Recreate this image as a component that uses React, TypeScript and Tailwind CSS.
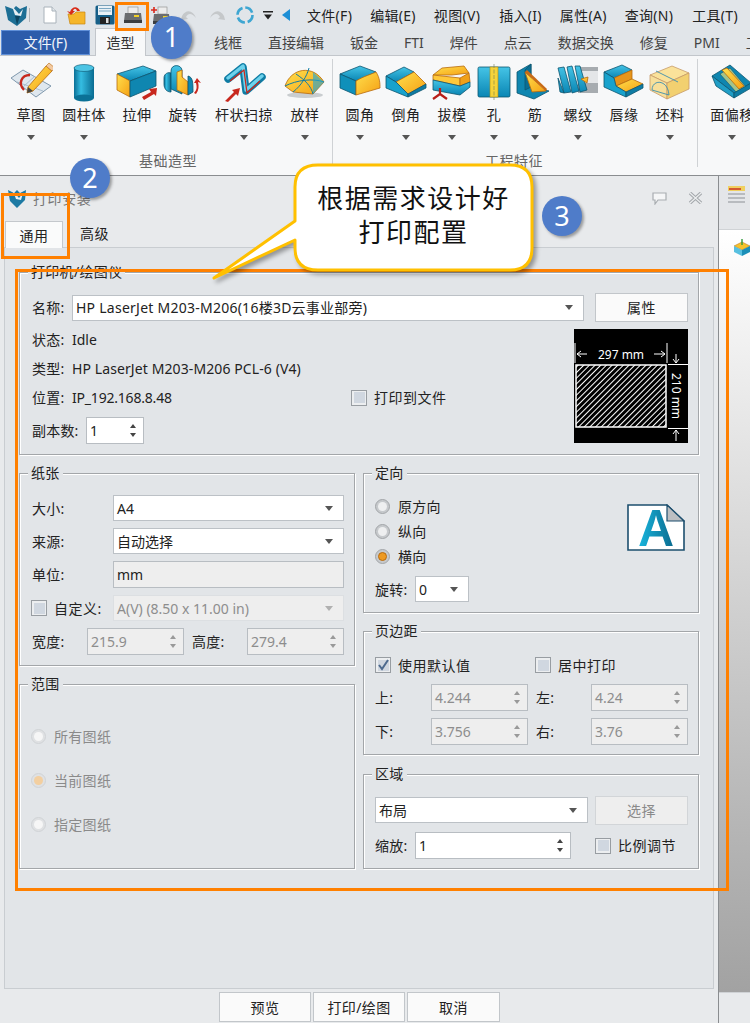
import type { ReactNode } from "react";

const menus = [
  ["文件(F)", "ml-[17px]"],
  ["编辑(E)", "ml-[18px]"],
  ["视图(V)", "ml-[18px]"],
  ["插入(I)", "ml-[19px]"],
  ["属性(A)", "ml-[18px]"],
  ["查询(N)", "ml-[18px]"],
  ["工具(T)", "ml-[19px]"],
];
const tabs = ["线框", "直接编辑", "钣金", "FTI", "焊件", "点云", "数据交换", "修复", "PMI", "工具"];

/* ---------- ribbon icons ---------- */
function Defs() {
  return (
    <svg className="absolute w-0 h-0">
      <defs>
        <linearGradient id="cy" x1="0" y1="0" x2="0" y2="1">
          <stop offset="0" stopColor="#45c4e6" />
          <stop offset="1" stopColor="#0a86b4" />
        </linearGradient>
        <linearGradient id="cyh" x1="0" y1="0" x2="1" y2="0">
          <stop offset="0" stopColor="#0b6f96" />
          <stop offset="0.35" stopColor="#35bde2" />
          <stop offset="1" stopColor="#0a6c92" />
        </linearGradient>
        <linearGradient id="ltr" x1="0" y1="0" x2="1" y2="0">
          <stop offset="0" stopColor="#18b4dc" />
          <stop offset="1" stopColor="#0b6c90" />
        </linearGradient>
        <linearGradient id="ye" x1="0" y1="0" x2="1" y2="1">
          <stop offset="0" stopColor="#ffe04d" />
          <stop offset="1" stopColor="#f5a014" />
        </linearGradient>
      </defs>
    </svg>
  );
}

const edge = { stroke: "#0d5670", strokeWidth: 0.8, strokeLinejoin: "round" as const };
const yedge = { stroke: "#b8690e", strokeWidth: 0.8, strokeLinejoin: "round" as const };

const icons: Record<string, ReactNode> = {
  草图: (
    <>
      <path d="M2 16 L14 8 L42 24 L27 35 Z" fill="#dfe7ee" stroke="#7f98ad" strokeWidth="1" />
      <path d="M8 20 L34 29 M14 25 L26 14 M21 30 L33 19" stroke="#9db2c4" strokeWidth="0.8" fill="none" />
      <path d="M21 13 C12 13 9 22 15 28" fill="none" stroke="#c6281e" strokeWidth="2.4" />
      <path d="M19 25 L37 4 L43 9 L24 29 L18 31 Z" fill="url(#ye)" {...yedge} />
      <path d="M37 4 L40 1 L46 6 L43 9 Z" fill="#f2c9a0" stroke="#b8690e" strokeWidth="0.6" />
      <path d="M19 25 L18 31 L24 29 Z" fill="#444" />
    </>
  ),
  圆柱体: (
    <>
      <rect x="12" y="5" width="20" height="31" fill="url(#cyh)" />
      <ellipse cx="22" cy="36" rx="10" ry="3.5" fill="#0b7196" />
      <ellipse cx="22" cy="6" rx="10" ry="3.5" fill="#4cc4e4" stroke="#0d5670" strokeWidth="0.6" />
    </>
  ),
  拉伸: (
    <>
      <path d="M2 12 L28 4 L41 9 L15 19 Z" fill="url(#cy)" {...edge} />
      <path d="M2 12 L15 19 L15 35 L2 28 Z" fill="url(#ye)" {...yedge} />
      <path d="M15 19 L41 9 L41 24 L15 35 Z" fill="#0f86b0" {...edge} />
      <path d="M27 35 L36 30 L34 27 L42 26 L41 34 L39 32 L29 38 Z" fill="#c8281e" />
    </>
  ),
  旋转: (
    <>
      <path d="M3 16 C3 11 8 10 10 11 L10 30 C6 30 3 27 3 22 Z" fill="url(#cyh)" {...edge} />
      <path d="M10 9 C10 2 20 2 21 8 L21 32 L10 27 Z" fill="url(#cy)" {...edge} />
      <path d="M16 10 L21 8 L21 15 L27 20 L27 33 L16 28 Z" fill="url(#ye)" {...yedge} />
      <path d="M27 14 C32 15 32 21 32 30 L27 33 Z" fill="#0f86b0" {...edge} />
      <path d="M35 32 C38 28 38 24 37 20 L40 21 L36 16 L33 21 L35 21 C36 25 36 28 33 31 Z" fill="#c8281e" />
    </>
  ),
  杆状扫掠: (
    <>
      <path d="M6 17 L21 5 L24 29 L40 15" fill="none" stroke="#0e7ca4" strokeWidth="7.5" strokeLinejoin="round" strokeLinecap="round" />
      <path d="M6 16 L21 4 L24 28 L40 14" fill="none" stroke="#6dd2ec" strokeWidth="3.4" strokeLinejoin="round" strokeLinecap="round" />
      <path d="M8 19 L22 8 L25 31 L38 19" fill="none" stroke="#c8281e" strokeWidth="1.3" strokeLinejoin="round" />
      <path d="M3 39 L12 30 L10 28 L18 26 L16 34 L14 32 L6 40 Z" fill="#c8281e" />
    </>
  ),
  放样: (
    <>
      <ellipse cx="22" cy="33" rx="18" ry="3" fill="#c9cdd0" />
      <path d="M2 24 C8 6 30 2 41 20 L30 32 L10 30 Z" fill="url(#ye)" {...yedge} />
      <path d="M13 12 C22 18 28 24 30 32 M26 6 C24 14 18 24 10 30 M2 24 C14 18 30 16 41 20" fill="none" stroke="#0f7da6" strokeWidth="1" />
      <path d="M30 10 L41 20 L30 32 Z" fill="#28a8d0" fillOpacity="0.65" />
    </>
  ),
  圆角: (
    <>
      <path d="M2 12 L22 4 L38 10 L18 19 Z" fill="url(#cy)" {...edge} />
      <path d="M2 12 L18 19 L18 33 L2 26 Z" fill="#0f90ba" {...edge} />
      <path d="M18 19 C26 14 34 12 38 10 C42 16 42 22 42 26 L18 33 Z" fill="url(#ye)" {...yedge} />
    </>
  ),
  倒角: (
    <>
      <path d="M2 14 L20 5 L30 10 L12 20 Z" fill="url(#cy)" {...edge} />
      <path d="M12 20 L30 10 L42 22 L24 32 Z" fill="url(#ye)" {...yedge} />
      <path d="M2 14 L12 20 L24 32 L24 35 L2 26 Z" fill="#18a2cc" {...edge} />
      <path d="M24 32 L42 22 L42 26 L24 35 Z" fill="#0e7ca4" {...edge} />
    </>
  ),
  拔模: (
    <>
      <path d="M3 13 L12 6 L34 4 L39 11 L22 13 Z" fill="url(#ye)" {...yedge} />
      <path d="M3 13 L30 16 L30 24 L3 18 Z" fill="#ffc83a" {...yedge} />
      <path d="M30 16 L39 11 L40 20 L30 24 Z" fill="#f0a018" {...yedge} />
      <path d="M3 18 L30 24 L40 20 L40 25 L30 33 L3 28 Z" fill="url(#cy)" {...edge} />
      <path d="M10 26 L10 32 M10 32 L3 37 M10 32 L17 37" stroke="#b81e18" strokeWidth="2.2" fill="none" />
    </>
  ),
  孔: (
    <>
      <rect x="6" y="5" width="32" height="30" rx="1.5" fill="url(#cy)" stroke="#0d5670" strokeWidth="0.8" />
      <rect x="18" y="5" width="8" height="30" fill="#f5d33a" stroke="#a98b17" strokeWidth="0.6" />
      <path d="M22 2 L22 38" stroke="#6f7c58" strokeWidth="0.6" strokeDasharray="4 1.5" />
    </>
  ),
  筋: (
    <>
      <path d="M4 10 L18 2 L18 25 L36 29 L21 37 L4 31 Z" fill="#0f86b0" {...edge} />
      <path d="M12 8 L18 2 L18 25 L12 28 Z" fill="#0a6e94" {...edge} />
      <path d="M12 10 L33 29 L19 30 Z" fill="url(#ye)" {...yedge} />
      <path d="M12 10 L14 8 L34 27 L33 29 Z" fill="#c86a16" />
    </>
  ),
  螺纹: (
    <>
      <rect x="22" y="5" width="20" height="26" fill="#a7acb0" />
      <rect x="26" y="9" width="16" height="12" fill="#e4e6e8" />
      <path d="M2 6 L8 5 L15 30 L8 31 Z M11 5 L16 4 L23 29 L16 31 Z M19 4 L24 4 L31 28 L24 30 Z M2 16 L4 30 L8 31 Z" fill="url(#cy)" {...edge} />
      <path d="M25 17 L32 15 L31 21 Z" fill="url(#ye)" {...yedge} />
    </>
  ),
  唇缘: (
    <>
      <path d="M2 10 L20 3 L30 8 L12 16 Z" fill="url(#cy)" {...edge} />
      <path d="M12 16 L30 8 L30 17 L14 24 Z" fill="#e6951a" {...yedge} />
      <path d="M14 24 L30 17 L41 22 L24 30 Z" fill="url(#ye)" {...yedge} />
      <path d="M2 10 L12 16 L14 24 L24 30 L24 35 L2 25 Z" fill="#18a2cc" {...edge} />
      <path d="M24 30 L41 22 L41 26 L24 35 Z" fill="#0e7ca4" {...edge} />
    </>
  ),
  坯料: (
    <>
      <path d="M2 13 L24 4 L41 11 L19 21 Z" fill="#fae29a" stroke="#c79a6a" strokeWidth="0.8" />
      <path d="M2 13 L19 21 L19 37 L2 28 Z" fill="#f7df9a" stroke="#c79a6a" strokeWidth="0.8" />
      <path d="M19 21 L41 11 L41 27 L19 37 Z" fill="#f2d070" stroke="#c79a6a" strokeWidth="0.8" />
      <path d="M4 28 C4 17 20 17 21 33 M4 28 L21 33 M8 9 L30 20" fill="none" stroke="#3d8fb0" strokeWidth="0.9" />
    </>
  ),
  面偏移: (
    <>
      <path d="M2 14 L20 3 L41 21 L24 31 Z" fill="#0f86b0" {...edge} />
      <path d="M2 14 L24 31 L24 36 L6 24 Z" fill="#1f9ec6" {...edge} />
      <path d="M10 12 L20 6 L36 25 L26 30 Z" fill="#a3c38a" stroke="#0d5670" strokeWidth="0.6" />
      <path d="M12 8 L17 6 L34 24 L29 27 Z" fill="url(#ye)" {...yedge} />
      <path d="M24 31 L41 21 L41 26 L24 36 Z" fill="#0e7ca4" {...edge} />
    </>
  ),
};

function Caret({ c = "#555" }: { c?: string }) {
  return (
    <svg width="8" height="5" viewBox="0 0 8 5" className="shrink-0">
      <path d="M0 0 H8 L4 5 Z" fill={c} />
    </svg>
  );
}

function RibbonItem({ label, w, arrow = true }: { label: string; w: string; arrow?: boolean }) {
  return (
    <div className={`${w} shrink-0 flex flex-col items-center`}>
      <div className="h-[46px] flex items-center">
        <svg width="44" height="40" viewBox="0 0 44 40" className="shrink-0">
          {icons[label]}
        </svg>
      </div>
      <div className="h-[20px] leading-[20px] whitespace-nowrap tracking-[0.5px] text-[#222]">{label}</div>
      <div className="mt-[10px] h-[5px]">{arrow && <Caret />}</div>
    </div>
  );
}

/* ---------- form bits ---------- */
function Group({ title, className, children }: { title: string; className: string; children: ReactNode }) {
  return (
    <div className={`relative border border-[#a3a6a9] shadow-[1px_1px_0_#fff,inset_1px_1px_0_#fff] ${className}`}>
      <span className="absolute -top-[11px] left-[8px] px-[3px] bg-[#e2e5e8] leading-[20px] tracking-[0.3px] text-[#222]">{title}</span>
      {children}
    </div>
  );
}

function Combo({ w, value, disabled, className = "" }: { w: string; value: string; disabled?: boolean; className?: string }) {
  return (
    <div
      className={`${w} h-[26px] shrink-0 flex items-center justify-between pl-[3px] pr-[10px] border border-[#bcc1c6] ${className} ${
        disabled ? "bg-[#eeeeee] border-[#dcdfe2] text-[#8d8d8d]" : "bg-white text-[#222]"
      }`}
    >
      <span className="whitespace-nowrap">{value}</span>
      <Caret c={disabled ? "#b0b0b0" : "#555"} />
    </div>
  );
}

function Spin({ w, value, disabled }: { w: string; value: string; disabled?: boolean }) {
  return (
    <div
      className={`${w} h-[27px] shrink-0 flex items-center justify-between pl-[3px] pr-[7px] border border-[#b8bdc2] ${
        disabled ? "bg-[#eeeeee] text-[#8d8d8d]" : "bg-white text-[#222]"
      }`}
    >
      <span>{value}</span>
      <div className="flex flex-col gap-[5px]">
        <svg width="6" height="4" viewBox="0 0 6 4"><path d="M0 4 H6 L3 0 Z" fill={disabled ? "#999" : "#444"} /></svg>
        <svg width="6" height="4" viewBox="0 0 6 4"><path d="M0 0 H6 L3 4 Z" fill={disabled ? "#999" : "#444"} /></svg>
      </div>
    </div>
  );
}

function Check({ on, label, className = "" }: { on?: boolean; label?: string; className?: string }) {
  return (
    <div className={`flex items-center shrink-0 ${className}`}>
      <div className="w-[16px] h-[16px] border border-[#989da2] bg-[#eceef0] flex items-center justify-center">
        <div className="w-[11px] h-[11px] bg-[#d0d7e0] flex items-center justify-center">
          {on && (
            <svg width="12" height="12" viewBox="0 0 12 12" className="shrink-0">
              <path d="M2 6 L5 10 L11 1" fill="none" stroke="#4d6a8e" strokeWidth="2" />
            </svg>
          )}
        </div>
      </div>
      {label && <span className="ml-[7px] tracking-[0.5px] whitespace-nowrap text-[#222]">{label}</span>}
    </div>
  );
}

function Radio({ on, label, disabled }: { on?: boolean; label: string; disabled?: boolean }) {
  return (
    <div className="flex items-center">
      <div
        className={`w-[15px] h-[15px] rounded-full border flex items-center justify-center ${
          disabled ? "border-[#d0d3d6] bg-[#dfe1e3]" : "border-[#a3a6a9] bg-[#c6c9cc]"
        }`}
      >
        <div
          className={`w-[9px] h-[9px] rounded-full ${
            on ? (disabled ? "bg-[#f3cfa0]" : "bg-[#ee9a22] border border-[#b86c10]") : disabled ? "bg-[#f6f6f6]" : "bg-[#eeeff0]"
          }`}
        />
      </div>
      <span className={`ml-[8px] tracking-[0.3px] whitespace-nowrap ${disabled ? "text-[#8a8a8a]" : "text-[#222]"}`}>{label}</span>
    </div>
  );
}

function Btn({ children, className = "" }: { children: ReactNode; className?: string }) {
  return (
    <div className={`flex items-center justify-center border border-[#c2c6ca] bg-[#fafafa] text-[#222] tracking-[0.4px] ${className}`}>
      {children}
    </div>
  );
}

function Lab({ w, children }: { w: string; children: ReactNode }) {
  return <div className={`${w} shrink-0 tracking-[0.2px] whitespace-nowrap text-[#222]`}>{children}</div>;
}

function PaperPreview() {
  return (
    <svg width="114" height="114" viewBox="0 0 114 114" className="shrink-0">
      <defs>
        <pattern id="hatch" width="4" height="4" patternUnits="userSpaceOnUse" patternTransform="rotate(45)">
          <rect width="4" height="4" fill="#000" />
          <rect width="1" height="4" fill="#fff" />
        </pattern>
      </defs>
      <rect width="114" height="114" fill="#000" />
      <rect x="2" y="36" width="90" height="62" fill="url(#hatch)" stroke="#fff" strokeWidth="1.5" />
      <path d="M1 14 V34 M93 14 V34 M94 35.5 H114 M94 99.5 H114 M3 25 H13 M80 25 H91 M3 25 L7 22 M3 25 L7 28 M91 25 L87 22 M91 25 L87 28 M102 25 V34 M102 34 L99 30 M102 34 L105 30 M102 101 V112 M102 101 L99 105 M102 101 L105 105" stroke="#fff" strokeWidth="1" fill="none" />
      <text x="47" y="30" textAnchor="middle" fill="#fff" fontSize="12" fontFamily="Noto Sans">297 mm</text>
      <text transform="translate(98 67) rotate(90)" textAnchor="middle" fill="#fff" fontSize="12" fontFamily="Noto Sans">210 mm</text>
    </svg>
  );
}

function Annotation() {
  return (
    <>
      <div className="absolute left-[115px] top-[2px] w-[34px] h-[29px] border-[3px] border-[#ff8000]" />
      <div className="absolute left-[1px] top-[193px] w-[69px] h-[66px] border-[3px] border-[#ff8000]" />
      <div className="absolute left-[15px] top-[269px] w-[714px] h-[622px] border-[3px] border-[#ff8000]" />
      {[
        ["1", "left-[151px] top-[16px] w-[41px] h-[43px]"],
        ["2", "left-[70px] top-[158px] w-[40px] h-[40px]"],
        ["3", "left-[542px] top-[196px] w-[40px] h-[40px]"],
      ].map(([n, pos]) => (
        <div
          key={n}
          className={`absolute ${pos} rounded-full bg-[#4f7cc9] shadow-[2px_2px_3px_rgba(0,0,0,0.35)] flex items-center justify-center text-white text-[27px] font-['Noto_Sans']`}
        >
          {n}
        </div>
      ))}
      <svg width="750" height="300" viewBox="0 0 750 300" className="absolute left-0 top-0 pointer-events-none">
        <path
          d="M318 165 H510 Q532 165 532 187 V248 Q532 270 510 270 H318 Q295 270 295 248 V240 L214 278 L295 221 V187 Q295 165 318 165 Z"
          fill="#fff"
          stroke="#ffc000"
          strokeWidth="3"
          strokeLinejoin="round"
          style={{ filter: "drop-shadow(3px 3px 2px rgba(0,0,0,0.35))" }}
        />
      </svg>
      <div className="absolute left-[296px] top-[181px] w-[235px] text-center text-[26px] leading-[34px] tracking-[1.5px] text-[#111]">
        <div>根据需求设计好</div>
        <div>打印配置</div>
      </div>
    </>
  );
}

export default function App() {
  return (
    <div className="relative w-[750px] h-[1023px] overflow-hidden bg-[#e8eaec] text-[14px] font-['Noto_Sans','Noto_Sans_CJK_SC',sans-serif]">
      <Defs />

      {/* quick access + menu */}
      <div className="h-[30px] bg-[#e1e5e9] flex items-center text-[#222] overflow-hidden">
        <svg width="24" height="24" viewBox="0 0 24 24" className="ml-[4px] shrink-0">
          <path d="M1 3 L9 6 L12 3 L16 6 L23 3 L22 15 L13 23 L4 17 Z" fill="#1d6f95" />
          <path d="M8 3 L15 11 L19 6 L17 13 L11 12 Z" fill="#e6eef2" />
          <path d="M11 13 L13 22 L16 13 Z" fill="#0c4560" />
        </svg>
        <div className="ml-[1px] w-px h-[14px] bg-[#aeb3b8] shrink-0" />
        <svg width="16" height="18" viewBox="0 0 16 18" className="ml-[12px] shrink-0">
          <path d="M2 1 H10 L14 5 V17 H2 Z" fill="#fff" stroke="#a9b2ba" />
          <path d="M10 1 V5 H14" fill="#e3e8ec" stroke="#a9b2ba" />
        </svg>
        <svg width="20" height="20" viewBox="0 0 20 20" className="ml-[9px] shrink-0">
          <path d="M1 9 H7 L9 7 H18 V19 H3 Z" fill="#f5b62a" stroke="#c98612" strokeWidth="0.7" />
          <path d="M3 7 C5 1 11 1 13 6 L10 6 C9 3 7 3 6 6 L8 6 L4 10 L0 6 Z" fill="#d92a16" />
        </svg>
        <svg width="20" height="20" viewBox="0 0 20 20" className="ml-[8px] shrink-0">
          <rect x="0.5" y="0.5" width="19" height="19" rx="1.5" fill="#165f88" />
          <rect x="3" y="1" width="14" height="9" fill="#e8f0f5" />
          <path d="M4 3.5 H16 M4 6 H16" stroke="#7ba7c2" />
          <rect x="5" y="12" width="10" height="7" fill="#222" />
          <rect x="11" y="13" width="2.5" height="5" fill="#ddd" />
        </svg>
        <svg width="20" height="18" viewBox="0 0 20 18" className="ml-[8px] shrink-0">
          <rect x="5" y="1" width="10" height="7" fill="#ececec" stroke="#888" strokeWidth="0.6" />
          <path d="M2 7 H18 L19 15 H1 Z" fill="#6a6d70" />
          <rect x="1" y="14" width="18" height="3" fill="#3a3d3f" />
          <rect x="11" y="9" width="5" height="2" fill="#f0d028" />
        </svg>
        <svg width="20" height="19" viewBox="0 0 20 19" className="ml-[8px] shrink-0">
          <rect x="7" y="1" width="9" height="7" fill="#ececec" stroke="#888" strokeWidth="0.6" />
          <path d="M3 8 H18 L19 16 H2 Z" fill="#6a6d70" />
          <rect x="2" y="15" width="17" height="3" fill="#3a3d3f" />
          <rect x="12" y="10" width="5" height="2" fill="#f0d028" />
          <path d="M0 4 H6 M3 1 V7" stroke="#d9281c" strokeWidth="1.6" />
        </svg>
        <svg width="16" height="12" viewBox="0 0 16 12" className="ml-[10px] shrink-0">
          <path d="M1 7 C5 0 12 1 15 9 C11 4 7 4 5 8 L7 10 L0 11 Z" fill="#c5c8ca" />
        </svg>
        <svg width="16" height="12" viewBox="0 0 16 12" className="ml-[12px] shrink-0">
          <path d="M15 7 C11 0 4 1 1 9 C5 4 9 4 11 8 L9 10 L16 11 Z" fill="#c5c8ca" />
        </svg>
        <svg width="20" height="20" viewBox="0 0 20 20" className="ml-[10px] shrink-0">
          <circle cx="10" cy="10" r="7.5" fill="none" stroke="#3ea6d2" strokeWidth="2.6" strokeDasharray="9 2.8" />
        </svg>
        <svg width="10" height="9" viewBox="0 0 10 9" className="ml-[8px] shrink-0">
          <path d="M0 0 H10 V1.5 H0 Z M1 3.5 H9 L5 8.5 Z" fill="#222" />
        </svg>
        <svg width="8" height="12" viewBox="0 0 8 12" className="ml-[9px] shrink-0">
          <path d="M8 0 V12 L0 6 Z" fill="#1d8fd6" />
        </svg>
        {menus.map(([m, ml]) => (
          <span key={m} className={`${ml} shrink-0 whitespace-nowrap tracking-[0.3px]`}>{m}</span>
        ))}
      </div>

      {/* ribbon tabs */}
      <div className="relative h-[26px] bg-[#e1e5e9] border-b border-[#c2c6cb] flex items-end text-[#444]">
        <div className="ml-[1px] w-[89px] h-[25px] shrink-0 bg-[#2c5cab] border border-[#5f8fd8] text-[#f2f5fa] flex items-center justify-center">文件(F)</div>
        <div className="ml-[5px] w-[51px] h-[28px] shrink-0 -mb-px bg-[#f7f8f9] border border-b-0 border-[#c2c6cb] text-[#333] flex items-center justify-center">造型</div>
        <div className="flex gap-[26px] ml-[68px] h-[25px] items-center whitespace-nowrap shrink-0">
          {tabs.map((t) => (
            <span key={t}>{t}</span>
          ))}
        </div>
      </div>

      {/* ribbon */}
      <div className="h-[120px] bg-[#f7f8f9] border-b border-[#8a8d90] flex overflow-hidden pt-[3px]">
        <div className="ml-[8px] w-[320px] shrink-0 flex flex-col">
          <div className="flex">
            <RibbonItem label="草图" w="w-[46px]" />
            <RibbonItem label="圆柱体" w="w-[60px]" />
            <RibbonItem label="拉伸" w="w-[46px]" arrow={false} />
            <RibbonItem label="旋转" w="w-[46px]" arrow={false} />
            <RibbonItem label="杆状扫掠" w="w-[76px]" />
            <RibbonItem label="放样" w="w-[46px]" />
          </div>
          <div className="mt-[11px] text-center leading-[20px] tracking-[0.5px] text-[#666]">基础造型</div>
        </div>
        <div className="ml-[4px] w-px h-[108px] bg-[#cfd2d5] shrink-0" />
        <div className="ml-[4px] w-[354px] shrink-0 flex flex-col">
          <div className="flex">
            <RibbonItem label="圆角" w="w-[46px]" />
            <RibbonItem label="倒角" w="w-[46px]" />
            <RibbonItem label="拔模" w="w-[46px]" />
            <RibbonItem label="孔" w="w-[38px]" />
            <RibbonItem label="筋" w="w-[44px]" />
            <RibbonItem label="螺纹" w="w-[42px]" />
            <RibbonItem label="唇缘" w="w-[50px]" arrow={false} />
            <RibbonItem label="坯料" w="w-[42px]" />
          </div>
          <div className="mt-[11px] text-center leading-[20px] tracking-[0.5px] text-[#666]">工程特征</div>
        </div>
        <div className="ml-[6px] w-px h-[108px] bg-[#cfd2d5] shrink-0" />
        <div className="ml-[6px] shrink-0">
          <RibbonItem label="面偏移" w="w-[56px]" />
        </div>
      </div>

      {/* dialog + side panel */}
      <div className="flex h-[847px]">
        <div className="w-[719px] shrink-0 bg-[#e8eaec] border-r border-[#8a8d90] flex flex-col">
          <div className="h-[44px] shrink-0 flex items-center pl-[8px] pr-[15px]">
            <svg width="18" height="20" viewBox="0 0 18 20" className="shrink-0">
              <path d="M0 2 L6 5 L9 2 L12 5 L18 2 L17 12 L9 20 L2 13 Z" fill="#1d7aa3" />
              <path d="M5 3 L11 10 L15 5 L13 12 L8 11 Z" fill="#e6eef2" />
            </svg>
            <span className="ml-[7px] text-[#777] tracking-[0.6px]">打印安装</span>
            <svg width="15" height="13" viewBox="0 0 15 13" className="ml-auto shrink-0">
              <path d="M1 1 H14 V8 H6 L3 12 V8 H1 Z" fill="#f5f6f7" stroke="#a9adb1" strokeWidth="1.2" />
            </svg>
            <svg width="15" height="12" viewBox="0 0 15 12" className="ml-[21px] shrink-0">
              <path d="M2 1 L13 11 M13 1 L2 11" stroke="#a4a8ac" strokeWidth="3.4" />
              <path d="M2 1 L13 11 M13 1 L2 11" stroke="#eceeef" strokeWidth="1.2" />
            </svg>
          </div>

          <div className="h-[27px] shrink-0 flex items-end pl-[5px]">
            <div className="w-[58px] h-[27px] -mb-px z-10 bg-[#fafbfb] border border-b-0 border-[#c4c8cc] flex items-center justify-center tracking-[0.5px] text-[#222]">通用</div>
            <div className="ml-[17px] h-[27px] flex items-center tracking-[0.5px] text-[#222]">高级</div>
          </div>

          <div className="ml-[4px] w-[710px] h-[742px] shrink-0 bg-[#e2e5e8] border border-[#c9cdd1] pt-[24px] pl-[14px]">
            <Group title="打印机/绘图仪" className="w-[680px] h-[183px] pt-[20px] pl-[12px]">
              <div className="flex items-center">
                <Lab w="w-[40px]">名称:</Lab>
                <Combo w="w-[512px]" value="HP LaserJet M203-M206(16楼3D云事业部旁)" className="tracking-[0.25px]" />
                <Btn className="ml-[11px] w-[93px] h-[29px]">属性</Btn>
              </div>
              <div className="flex mt-[3px]">
                <div className="w-[542px] shrink-0 text-[#222]">
                  <div className="h-[29px] flex items-center"><Lab w="w-[40px]">状态:</Lab>Idle</div>
                  <div className="h-[29px] flex items-center"><Lab w="w-[40px]">类型:</Lab><span className="tracking-[0.1px]">HP LaserJet M203-M206 PCL-6 (V4)</span></div>
                  <div className="h-[29px] flex items-center">
                    <Lab w="w-[40px]">位置:</Lab>
                    <span className="w-[279px] shrink-0 -tracking-[0.2px]">IP_192.168.8.48</span>
                    <Check label="打印到文件" />
                  </div>
                  <div className="mt-[5px] flex items-center">
                    <Lab w="w-[54px]">副本数:</Lab>
                    <Spin w="w-[58px]" value="1" />
                  </div>
                </div>
                <div className="mt-[4px]"><PaperPreview /></div>
              </div>
            </Group>

            <div className="flex gap-[8px] mt-[18px]">
              <div className="w-[336px] shrink-0">
                <Group title="纸张" className="h-[193px] pt-[21px] pl-[12px] flex flex-col">
                  <div className="flex items-center"><Lab w="w-[81px]">大小:</Lab><Combo w="w-[231px]" value="A4" /></div>
                  <div className="flex items-center mt-[7px]"><Lab w="w-[81px]">来源:</Lab><Combo w="w-[231px]" value="自动选择" /></div>
                  <div className="flex items-center mt-[7px]">
                    <Lab w="w-[81px]">单位:</Lab>
                    <div className="w-[231px] h-[27px] flex items-center pl-[3px] bg-[#eeeeee] border border-[#b8bdc2] text-[#222]">mm</div>
                  </div>
                  <div className="flex items-center mt-[7px]">
                    <Check label="自定义:" className="-ml-px w-[82px]" />
                    <Combo w="w-[231px]" value="A(V) (8.50 x 11.00 in)" disabled />
                  </div>
                  <div className="flex items-center mt-[7px]">
                    <Lab w="w-[55px]">宽度:</Lab>
                    <Spin w="w-[97px]" value="215.9" disabled />
                    <div className="ml-[8px]"><Lab w="w-[55px]">高度:</Lab></div>
                    <Spin w="w-[97px]" value="279.4" disabled />
                  </div>
                </Group>
                <Group title="范围" className="mt-[18px] h-[185px] pt-[41px] pl-[11px]">
                  <div className="flex flex-col gap-[24px] [&>div]:h-[20px]">
                    <Radio label="所有图纸" disabled />
                    <Radio label="当前图纸" on disabled />
                    <Radio label="指定图纸" disabled />
                  </div>
                </Group>
              </div>

              <div className="w-[336px] shrink-0">
                <Group title="定向" className="h-[140px] pt-[20px] pl-[11px]">
                  <div className="flex">
                    <div className="w-[252px] shrink-0 [&>div]:h-[25px]">
                      <Radio label="原方向" />
                      <Radio label="纵向" />
                      <Radio label="横向" on />
                    </div>
                    <svg width="58" height="47" viewBox="0 0 58 47" className="mt-[10px] shrink-0">
                      <path d="M1 1 H40 L57 17 V46 H1 Z" fill="#fff" stroke="#1d4f6e" strokeWidth="1.6" />
                      <path d="M40 1 V17 H57 Z" fill="#bcbfc2" stroke="#1d4f6e" strokeWidth="1.2" />
                      <text x="29" y="42" textAnchor="middle" fontSize="50" fontWeight="600" fontFamily="Noto Sans" fill="url(#ltr)">A</text>
                    </svg>
                  </div>
                  <div className="flex items-center mt-[7px]">
                    <Lab w="w-[40px]">旋转:</Lab>
                    <Combo w="w-[54px]" value="0" />
                  </div>
                </Group>
                <Group title="页边距" className="mt-[18px] h-[124px] pt-[23px] pl-[11px]">
                  <div className="flex items-center h-[20px]">
                    <Check on label="使用默认值" className="w-[160px]" />
                    <Check label="居中打印" />
                  </div>
                  <div className="flex items-center mt-[9px]">
                    <Lab w="w-[56px]">上:</Lab>
                    <Spin w="w-[97px]" value="4.244" disabled />
                    <div className="ml-[8px]"><Lab w="w-[55px]">左:</Lab></div>
                    <Spin w="w-[97px]" value="4.24" disabled />
                  </div>
                  <div className="flex items-center mt-[7px]">
                    <Lab w="w-[56px]">下:</Lab>
                    <Spin w="w-[97px]" value="3.756" disabled />
                    <div className="ml-[8px]"><Lab w="w-[55px]">右:</Lab></div>
                    <Spin w="w-[97px]" value="3.76" disabled />
                  </div>
                </Group>
                <Group title="区域" className="mt-[19px] h-[95px] pt-[22px] pl-[11px]">
                  <div className="flex items-start h-[26px]">
                    <Combo w="w-[213px]" value="布局" />
                    <div className="ml-[7px] -mt-px w-[93px] h-[29px] flex items-center justify-center bg-[#eeeeee] border border-[#d2d5d8] text-[#8a8a8a] tracking-[0.4px]">选择</div>
                  </div>
                  <div className="flex items-center mt-[9px]">
                    <Lab w="w-[40px]">缩放:</Lab>
                    <Spin w="w-[156px]" value="1" />
                    <Check label="比例调节" className="ml-[24px]" />
                  </div>
                </Group>
              </div>
            </div>
          </div>

          <div className="mt-[3px] ml-[219px] flex gap-[2px]">
            <Btn className="w-[92px] h-[30px]">预览</Btn>
            <Btn className="w-[92px] h-[30px]">打印/绘图</Btn>
            <Btn className="w-[93px] h-[30px]">取消</Btn>
          </div>
        </div>

        {/* side panel behind the dialog */}
        <div className="flex-1 flex flex-col">
          <div className="h-[54px] bg-[#e4e6e9] border-b border-[#d0d3d6] pl-[9px] pt-[10px]">
            <svg width="17" height="17" viewBox="0 0 17 17">
              <rect x="0" y="0" width="17" height="5" fill="#f0d060" />
              <path d="M1 3 H13" stroke="#c8281e" strokeWidth="1.4" />
              <path d="M0 8 H17 M0 12 H17 M0 16 H17" stroke="#a9adb1" strokeWidth="1.6" />
            </svg>
          </div>
          <div className="h-[762px] bg-linear-to-b from-[#ffffff] to-[#a2a2a2] pt-[8px] pl-[8px]">
            <svg width="18" height="18" viewBox="0 0 18 18" className="ml-[6px]">
              <path d="M1 8 L9 4 L17 8 L9 12 Z" fill="#f4c22c" stroke="#b8690e" strokeWidth="0.5" />
              <path d="M1 8 L9 12 V18 L1 14 Z" fill="#58c0e0" />
              <path d="M17 8 L9 12 V18 L17 14 Z" fill="#1a8fb8" />
              <path d="M9 7 V1" stroke="#2f9a3c" strokeWidth="1.4" />
            </svg>
          </div>
          <div className="flex-1 bg-[#e8eaec] border-t border-[#cfd2d5]" />
        </div>
      </div>

      <Annotation />
    </div>
  );
}
